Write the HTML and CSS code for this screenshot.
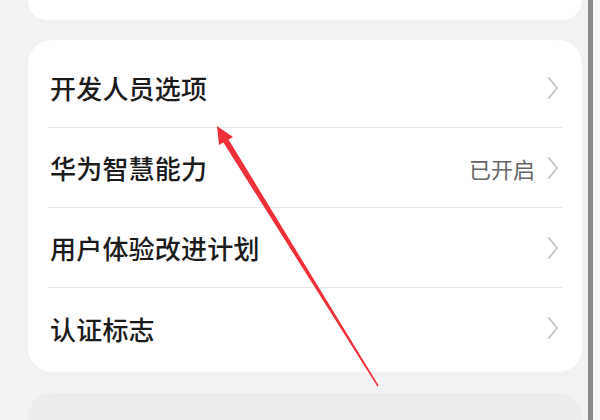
FILE: index.html
```html
<!DOCTYPE html>
<html lang="zh">
<head>
<meta charset="utf-8">
<link rel="stylesheet" href="styles.css">
</head>
<body>
<div class="screen">
  <div class="content">
    <div class="card card-top"></div>
    <div class="card list">
      <div class="row"><span class="label">开发人员选项</span><span class="right"><svg class="chev" viewBox="0 0 10 22"><path d="M1 1 L9 11 L1 21"/></svg></span></div>
      <div class="row"><span class="label">华为智慧能力</span><span class="right"><span class="value">已开启</span><svg class="chev" viewBox="0 0 10 22"><path d="M1 1 L9 11 L1 21"/></svg></span></div>
      <div class="row"><span class="label">用户体验改进计划</span><span class="right"><svg class="chev" viewBox="0 0 10 22"><path d="M1 1 L9 11 L1 21"/></svg></span></div>
      <div class="row last"><span class="label">认证标志</span><span class="right"><svg class="chev" viewBox="0 0 10 22"><path d="M1 1 L9 11 L1 21"/></svg></span></div>
    </div>
    <div class="card card-bottom"></div>
  </div>
  <div class="bar"></div>
  <div class="edge"></div>
  <svg class="arrow" viewBox="0 0 600 420" width="600" height="420">
    <polygon points="217,126 233,137 228.5,139.4 378.6,385.6 377.4,386.4 223.4,142.6 219,145"/>
  </svg>
</div>
</body>
</html>
```
FILE: styles.css
```css
html, body {
  margin: 0;
  padding: 0;
  width: 600px;
  height: 420px;
  overflow: hidden;
  background: #f1f2f4;
  font-family: "Noto Sans CJK SC", "Noto Sans", sans-serif;
}
.screen {
  position: relative;
  display: flex;
  width: 600px;
  height: 420px;
  overflow: hidden;
}
.content {
  flex: 1;
  padding: 0 6px 0 28px;
  display: flex;
  flex-direction: column;
}
.card {
  background: #ffffff;
  border-radius: 24px;
  flex-shrink: 0;
}
.card-top {
  height: 20px;
  border-radius: 0 0 24px 24px;
  margin-bottom: 20px;
}
.list {
  padding: 8px 20px 4px 20px;
}
.row {
  height: 79px;
  border-bottom: 1px solid #e6e6e6;
  display: flex;
  align-items: center;
  justify-content: space-between;
  padding: 0 4px 0 2px;
}
.row.last {
  border-bottom: none;
  height: 80px;
}
.label {
  font-size: 26px;
  font-weight: 500;
  color: #1b1b1b;
  letter-spacing: 0.2px;
}
.right {
  display: flex;
  align-items: center;
}
.value {
  font-size: 22px;
  color: #666666;
  margin-right: 13px;
}
.chev {
  width: 10px;
  height: 22px;
  fill: none;
  stroke: #c4c4c4;
  stroke-width: 1.8;
  stroke-linecap: round;
  stroke-linejoin: round;
}
.card-bottom {
  margin-top: 21px;
  height: 60px;
  background: #ebecee;
}
.bar {
  width: 5px;
  background: #8a8a8a;
  flex-shrink: 0;
}
.edge {
  width: 7px;
  background: #f6f6f6;
  flex-shrink: 0;
}
.arrow {
  position: absolute;
  left: 0;
  top: 0;
  fill: #ef3038;
}
```
